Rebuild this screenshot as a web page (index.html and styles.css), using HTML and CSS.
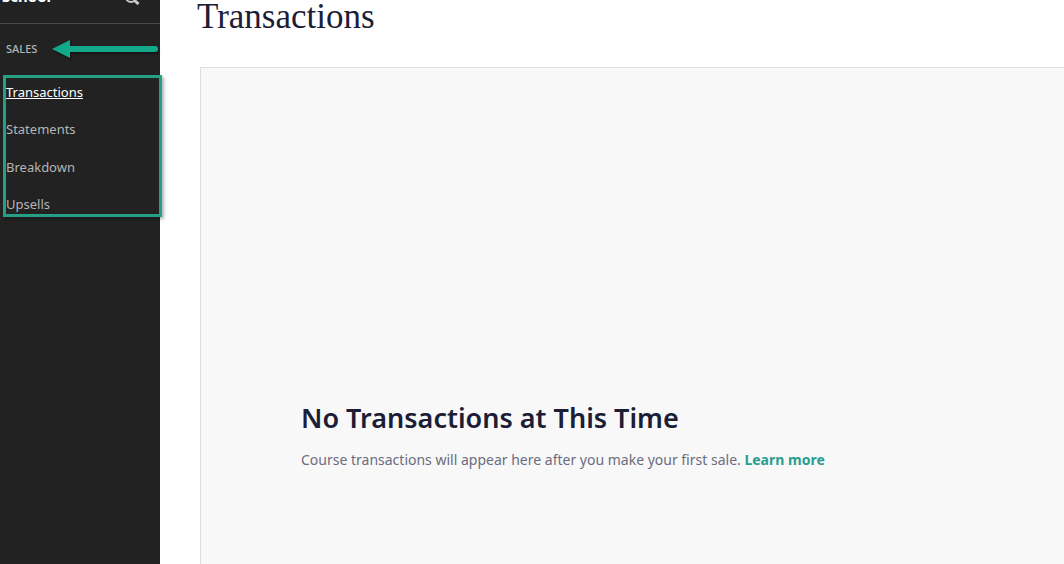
FILE: index.html
```html
<!DOCTYPE html>
<html lang="en">
<head>
    <meta charset="UTF-8">
    <meta name="viewport" content="width=device-width, initial-scale=1.0">
    <title>Transactions</title>
    <link rel="stylesheet" href="styles.css">
</head>
<body>
    <!-- Sidebar -->
    <aside class="sidebar">
        <div class="sidebar-header">
            <span class="school-name">School</span>
            <button class="search-button" type="button" aria-label="Search">
                <svg width="16" height="16" viewBox="0 0 16 16" fill="none" stroke="#c9c9c9">
                    <circle cx="7" cy="8" r="5" stroke-width="2"/>
                    <path d="M10 11l4.5 4" stroke-width="3"/>
                </svg>
            </button>
        </div>

        <div class="section-title">
            <h2>SALES</h2>
            <svg class="arrow" width="108" height="22" viewBox="0 0 108 22">
                <path d="M16 11H103" stroke="#12a98a" stroke-width="6" stroke-linecap="round"/>
                <path d="M0 11L18 2V20Z" fill="#12a98a"/>
            </svg>
        </div>

        <nav class="menu">
            <a class="menu-link active" href="#transactions">Transactions</a>
            <a class="menu-link" href="#statements">Statements</a>
            <a class="menu-link" href="#breakdown">Breakdown</a>
            <a class="menu-link" href="#upsells">Upsells</a>
        </nav>
    </aside>

    <!-- Content -->
    <main class="content">
        <h1>Transactions</h1>
        <section class="empty-state">
            <h2>No Transactions at This Time</h2>
            <p>Course transactions will appear here after you make your first sale. <a href="#learn-more">Learn more</a></p>
        </section>
    </main>
</body>
</html>
```

FILE: styles.css
```css
* {
    box-sizing: border-box;
}
body {
    margin: 0;
    min-height: 100vh;
    display: flex;
    font-family: "Segoe UI", "Noto Sans", sans-serif;
    background-color: #fff;
    color: #1c1d36;
}
h1, h2, p {
    margin: 0;
}
/* Sidebar */
.sidebar {
    width: 160px;
    flex-shrink: 0;
    background-color: #222;
    color: #b5b5b5;
}
.sidebar-header {
    display: flex;
    justify-content: space-between;
    align-items: flex-end;
    height: 24px;
    padding: 0 20px 18px 2px;
    border-bottom: 1px solid #4c4c4c;
}
.school-name {
    font-size: 15px;
    line-height: 18px;
    font-weight: 700;
    color: #fff;
}
.search-button {
    display: flex;
    padding: 0;
    border: none;
    background: none;
    cursor: pointer;
}
.section-title {
    display: flex;
    align-items: center;
    justify-content: space-between;
    height: 49px;
    padding-left: 6px;
}
.section-title h2 {
    font-size: 11px;
    line-height: 16px;
    font-weight: 500;
}
.arrow {
    flex-shrink: 0;
    filter: drop-shadow(1px 2px 1px rgba(0, 0, 0, 0.4));
}
.menu {
    position: relative;
    display: grid;
    grid-auto-rows: 1fr;
    align-items: center;
    min-height: 150px;
    padding-left: 6px;
}
/* frame around the menu */
.menu::after {
    content: "";
    position: absolute;
    top: 2px;
    right: -2px;
    bottom: 6px;
    left: 3px;
    border: 3px solid #25a085;
    box-shadow: 2px 2px 3px rgba(0, 0, 0, 0.3);
    pointer-events: none;
}
.menu-link {
    font-size: 13px;
    line-height: 20px;
    color: #b5b5b5;
    text-decoration: none;
}
.menu-link.active {
    color: #fff;
    text-decoration: underline;
}
/* Content */
.content {
    flex: 1;
    display: flex;
    flex-direction: column;
    padding-left: 40px;
}
.content h1 {
    height: 67px;
    margin-left: -3px;
    font-family: "Liberation Serif", serif;
    font-size: 35px;
    line-height: 34px;
    font-weight: 400;
}
.empty-state {
    flex: 1;
    display: flex;
    flex-direction: column;
    justify-content: flex-end;
    padding: 100px;
    padding-bottom: 92px;
    border: 1px solid #dcdfe0;
    border-width: 1px 0 0 1px;
    background-color: #f8f8f8;
}
.empty-state h2 {
    margin-bottom: 12px;
    font-size: 27px;
    line-height: 36px;
    font-weight: 600;
}
.empty-state p {
    font-size: 14px;
    line-height: 24px;
    color: #6b6c7e;
}
.empty-state a {
    font-weight: 700;
    color: #2a9d8f;
    text-decoration: none;
}
```
